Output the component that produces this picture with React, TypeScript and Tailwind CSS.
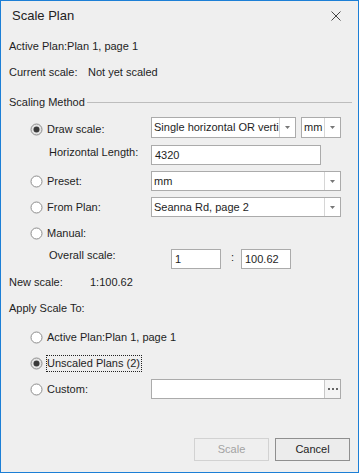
import React from 'react';

function Radio({ checked = false }: { checked?: boolean }) {
  return (
    <svg width="13" height="13" viewBox="0 0 13 13" className="shrink-0">
      <circle cx="6.5" cy="6.5" r="5.5" fill={checked ? '#e4e4e4' : '#ffffff'} stroke="#8c8c8c" />
      {checked && <circle cx="6.5" cy="6.5" r="3" fill="#3a3a3a" />}
    </svg>
  );
}

function Arrow() {
  return (
    <svg width="5" height="3" viewBox="0 0 5 3">
      <path d="M0 0h5L2.5 3z" fill="#777777" />
    </svg>
  );
}

function Combo({ value, className }: { value: string; className: string }) {
  return (
    <div className={`flex border border-[#ababab] bg-white ${className}`}>
      <div className="flex flex-1 items-center whitespace-nowrap pl-[2px]">{value}</div>
      <div className="flex w-[16px] items-center justify-center border-l border-[#d6d6d6]">
        <Arrow />
      </div>
    </div>
  );
}

function TextBox({ value, className }: { value: string; className: string }) {
  return (
    <div className={`flex h-[20px] items-center border border-[#ababab] bg-white pl-[3px] ${className}`}>
      {value}
    </div>
  );
}

export default function App() {
  return (
    <div className="flex h-[473px] w-[359px] flex-col border border-[#1c7fd6] bg-[#efefef] font-['Liberation_Sans',Arial,sans-serif] text-[11px] text-[#1e1e1e]">
      {/* Title bar */}
      <div className="flex h-[30px] items-center justify-between pl-[11px] pr-[17px]">
        <span className="text-[13px] text-[#222]">Scale Plan</span>
        <svg width="10" height="10" viewBox="0 0 10 10">
          <path d="M0.5 0.5l9 9M9.5 0.5l-9 9" stroke="#444" strokeWidth="1" />
        </svg>
      </div>

      <div className="flex flex-1 flex-col pl-[8px]">
        <div className="mt-[2px] flex h-[26px] items-center">Active Plan:Plan 1, page 1</div>
        <div className="flex h-[26px] items-center">
          <span className="w-[79px]">Current scale:</span>
          <span>Not yet scaled</span>
        </div>

        {/* Scaling Method group */}
        <div className="mt-[4px] flex h-[26px] items-center pr-[6px]">
          <span>Scaling Method</span>
          <div className="ml-[2px] h-px flex-1 bg-[#bdbdbd]" />
        </div>

        <div className="mt-[1px] flex h-[26px] items-center">
          <div className="flex w-[142px] items-center gap-[4px] pl-[21px]">
            <Radio checked />
            <span>Draw scale:</span>
          </div>
          <Combo value="Single horizontal OR verti" className="mb-[3px] h-[21px] w-[145px]" />
          <Combo value="mm" className="mb-[3px] ml-[5px] h-[21px] w-[40px]" />
        </div>
        <div className="flex h-[26px] items-center">
          <div className="mb-[6px] w-[142px] pl-[40px]">Horizontal Length:</div>
          <TextBox value="4320" className="w-[170px]" />
        </div>
        <div className="flex h-[26px] items-center">
          <div className="flex w-[142px] items-center gap-[4px] pl-[21px]">
            <Radio />
            <span>Preset:</span>
          </div>
          <Combo value="mm" className="h-[20px] w-[190px]" />
        </div>
        <div className="flex h-[26px] items-center">
          <div className="flex w-[142px] items-center gap-[4px] pl-[21px]">
            <Radio />
            <span>From Plan:</span>
          </div>
          <Combo value="Seanna Rd, page 2" className="h-[20px] w-[190px]" />
        </div>
        <div className="flex h-[26px] items-center">
          <div className="flex w-[142px] items-center gap-[4px] pl-[21px]">
            <Radio />
            <span>Manual:</span>
          </div>
        </div>
        <div className="flex h-[24px] items-center">
          <div className="mb-[5px] w-[162px] pl-[40px]">Overall scale:</div>
          <TextBox value="1" className="mt-[2px] w-[50px]" />
          <span className="mb-[2px] w-[20px] pl-[10px]">:</span>
          <TextBox value="100.62" className="mt-[2px] w-[50px]" />
        </div>

        <div className="flex h-[24px] items-center">
          <span className="w-[81px]">New scale:</span>
          <span>1:100.62</span>
        </div>

        <div className="mt-[1px] flex h-[26px] items-center">Apply Scale To:</div>

        <div className="mt-[3px] flex h-[26px] items-center gap-[4px] pl-[21px]">
          <Radio />
          <span>Active Plan:Plan 1, page 1</span>
        </div>
        <div className="flex h-[26px] items-center gap-[3px] pl-[21px]">
          <Radio checked />
          <span className="border border-dotted border-[#222] pr-[1px] leading-[15px]">Unscaled Plans (2)</span>
        </div>
        <div className="flex h-[26px] items-center">
          <div className="flex w-[142px] items-center gap-[4px] pl-[21px]">
            <Radio />
            <span>Custom:</span>
          </div>
          <div className="flex h-[20px] w-[190px] border border-[#ababab] bg-white">
            <div className="flex-1" />
            <div className="flex w-[16px] items-center justify-center gap-[2px] border-l border-[#c8c8c8] bg-[#f4f4f4]">
              <span className="h-[2px] w-[2px] bg-[#666]" />
              <span className="h-[2px] w-[2px] bg-[#666]" />
              <span className="h-[2px] w-[2px] bg-[#666]" />
            </div>
          </div>
        </div>

        <div className="flex-1" />

        <div className="flex justify-end gap-[6px] pb-[11px] pr-[8px]">
          <div className="flex h-[23px] w-[75px] items-center justify-center border border-[#d2d2d2] text-[#a3a3a3]">
            Scale
          </div>
          <div className="flex h-[23px] w-[75px] items-center justify-center border border-[#8f8f8f] bg-[#ececec]">
            Cancel
          </div>
        </div>
      </div>
    </div>
  );
}
